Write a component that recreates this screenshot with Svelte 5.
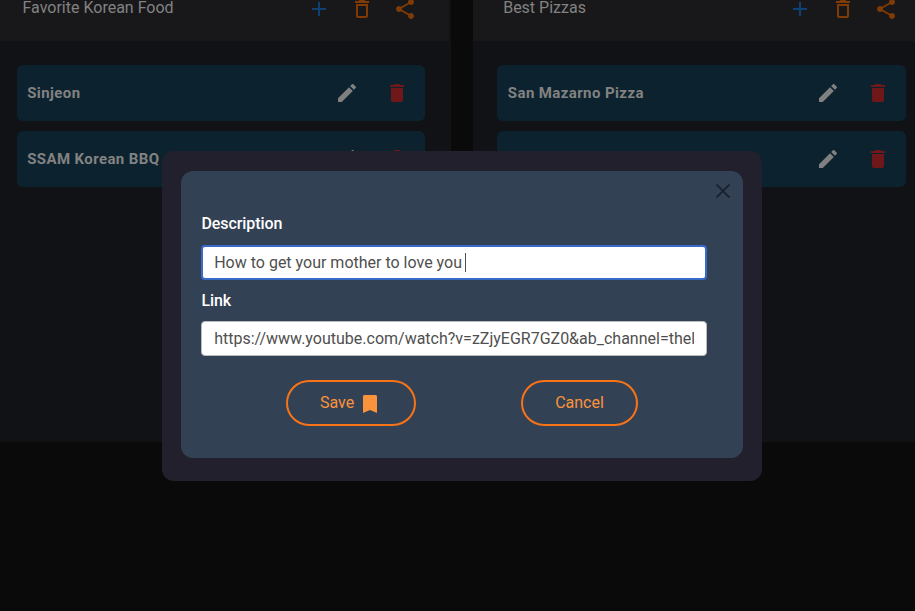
<script>
  const lists = [
    { title: 'Favorite Korean Food', items: ['Sinjeon', 'SSAM Korean BBQ'] },
    { title: 'Best Pizzas', items: ['San Mazarno Pizza', ''] }
  ];
  const description = 'How to get your mother to love you';
  const link = 'https://www.youtube.com/watch?v=zZjyEGR7GZ0&ab_channel=thel';
  const icons = {
    add: 'M19 13h-6v6h-2v-6H5v-2h6V5h2v6h6v2z',
    bin: 'M6 19c0 1.1.9 2 2 2h8c1.1 0 2-.9 2-2V7H6v12zM8 9h8v10H8V9zm7.5-5-1-1h-5l-1 1H5v2h14V4z',
    share: 'M18 16.08c-.76 0-1.44.3-1.96.77L8.91 12.7c.05-.23.09-.46.09-.7s-.04-.47-.09-.7l7.05-4.11c.54.5 1.25.81 2.04.81 1.66 0 3-1.34 3-3s-1.34-3-3-3-3 1.34-3 3c0 .24.04.47.09.7L8.04 9.81C7.5 9.31 6.79 9 6 9c-1.66 0-3 1.34-3 3s1.34 3 3 3c.79 0 1.5-.31 2.04-.81l7.12 4.16c-.05.21-.08.43-.08.65 0 1.61 1.31 2.92 2.92 2.92s2.92-1.31 2.92-2.92-1.31-2.92-2.92-2.92z',
    edit: 'M3 17.25V21h3.75L17.81 9.94l-3.75-3.75L3 17.25zM20.71 7.04a1 1 0 0 0 0-1.41l-2.34-2.34a1 1 0 0 0-1.41 0l-1.83 1.83 3.75 3.75 1.83-1.83z',
    trash: 'M6 19c0 1.1.9 2 2 2h8c1.1 0 2-.9 2-2V7H6v12zM19 4h-3.5l-1-1h-5l-1 1H5v2h14V4z',
    bookmark: 'M19 21 12 18l-7 3V4.500c0-.8.7-1.500 1.500-1.500h11c.8 0 1.500.7 1.500 1.500z'
  };
</script>

{#snippet icon(name)}
  <svg class="icon {name}" viewBox="0 0 24 24" width="24" height="24"><path d={icons[name]} /></svg>
{/snippet}

<main>
  <div class="board">
    {#each lists as list}
      <section>
        <header>
          <h2>{list.title}</h2>
          <div class="tools">{@render icon('add')}{@render icon('bin')}{@render icon('share')}</div>
        </header>
        <div class="items">
          {#each list.items as item}
            <div class="item">
              <span>{item}</span>
              {@render icon('edit')}{@render icon('trash')}
            </div>
          {/each}
        </div>
      </section>
    {/each}
  </div>

  <div class="modal">
    <div class="form">
      <svg class="close" viewBox="0 0 14 14" width="14" height="14"><path d="M.5.5l13 13M13.500.5l-13 13" /></svg>
      <div class="label">Description</div>
      <div class="field focused">{description}<i class="caret"></i></div>
      <div class="label second">Link</div>
      <div class="field"><div class="clip">{link}</div></div>
      <div class="actions">
        <button class="save">Save {@render icon('bookmark')}</button>
        <button class="cancel">Cancel</button>
      </div>
    </div>
  </div>
</main>

<style>
  :global(body) { margin: 0; background: #0a0a0a; }
  main {
    position: relative;
    width: 915px;
    height: 611px;
    overflow: hidden;
    font: 16px/24px Roboto, sans-serif;
  }
  .board { display: flex; gap: 22px; margin-left: -8px; }
  section {
    box-sizing: border-box;
    flex: 0 0 458.67px;
    height: 442px;
    background: #111216;
    border: solid #121214;
    border-width: 0 2px 2px 0;
    border-radius: 0 0 8px 8px;
  }
  header {
    display: flex;
    justify-content: space-between;
    box-sizing: border-box;
    height: 41px;
    padding: 0 31.67px 0 30.5px;
    background: #18181a;
  }
  h2 { margin: 0; font-size: 16px; line-height: 16px; font-weight: 400; color: #828282; }
  .tools { display: flex; gap: 19px; margin-top: -3px; }
  .icon { display: block; flex: none; fill: currentColor; }
  .add { color: #104175; }
  .bin, .share { color: #803b05; }
  .items { display: flex; flex-direction: column; gap: 10px; padding: 24px 23.5px 0 24.67px; }
  .item {
    display: flex;
    align-items: center;
    box-sizing: border-box;
    height: 56px;
    padding: 0 16px 0 10.5px;
    border-radius: 6px;
    background: #0c232f;
    color: #828282;
    font-size: 15px;
    font-weight: 700;
    letter-spacing: .4px;
  }
  .item span { flex: 1; }
  .edit { color: #808080; margin-right: 26px; }
  .trash { color: #701819; }
  .modal {
    position: absolute;
    left: 162px;
    top: 151px;
    box-sizing: border-box;
    width: 600px;
    height: 330px;
    padding: 20px 19px 23px;
    border-radius: 12px;
    background: #22202d;
  }
  .form {
    position: relative;
    box-sizing: border-box;
    height: 287px;
    padding: 41px 36px 0 20px;
    border-radius: 12px;
    background: #334155;
  }
  .close { position: absolute; right: 13px; top: 13px; fill: none; stroke: #18202c; stroke-width: 1.8; }
  .label { padding-left: .4px; color: #fff; font-weight: 500; letter-spacing: -.06px; }
  .second { margin-top: 9px; }
  .field {
    display: flex;
    align-items: center;
    box-sizing: border-box;
    height: 35px;
    margin-top: 9px;
    padding: 0 11.600px 0 12.2px;
    border: 1px solid #bbb;
    border-radius: 4px;
    background: #fff;
    color: #4f4f4f;
    white-space: nowrap;
  }
  .second + .field { margin-top: 8px; }
  .field.focused { padding: 0 11px 0 11.2px; border: 2px solid #386bc9; }
  .clip { overflow: hidden; width: 100%; }
  .caret { width: 1px; height: 19px; margin-left: 3px; background: #4f4f4f; }
  .actions { display: flex; gap: 105px; margin: 24px 0 0 85px; }
  button {
    display: flex;
    align-items: center;
    justify-content: center;
    box-sizing: border-box;
    height: 46px;
    padding: 0 0 1px;
    border: 2px solid #f97316;
    border-radius: 23px;
    background: none;
    color: #fb923c;
    font: 400 16px/24px Roboto, sans-serif;
  }
  .save { width: 130px; gap: 4px; }
  .cancel { width: 117px; }
  .bookmark { margin-top: 3px; }
</style>
